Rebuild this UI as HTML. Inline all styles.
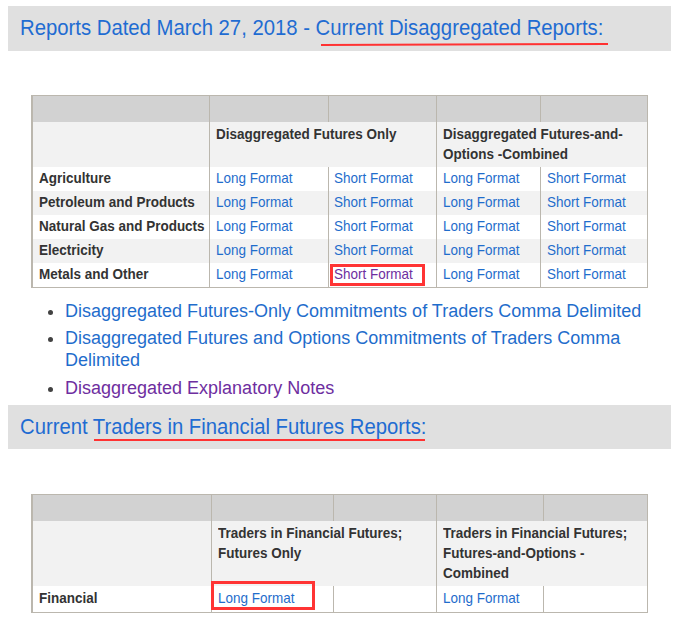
<!DOCTYPE html>
<html><head><meta charset="utf-8">
<style>
html,body{margin:0;padding:0;background:#fff;width:697px;height:620px;overflow:hidden;position:relative;}
body{font-family:"Liberation Sans",sans-serif;}
.a{position:absolute;white-space:nowrap;}
.hbox{position:absolute;left:8px;width:663px;background:#e0e0e0;}
.htxt{position:absolute;left:19.6px;font-size:21.4px;color:#1f6cd2;line-height:24px;transform:scaleX(0.949);transform-origin:0 0;}
.bg{position:absolute;}
.vl{position:absolute;width:1px;background:#bbb7ae;}
.hl{position:absolute;height:1px;background:#bbb7ae;}
.t{position:absolute;white-space:nowrap;font-size:14.5px;line-height:20px;transform:scaleX(0.93);transform-origin:0 0;}
.b{font-weight:bold;color:#333;}
.l{color:#1f6dcc;}
.v,.li.v{color:#6e2ea0;}
.li{position:absolute;left:65px;font-size:18px;line-height:22px;color:#1f6dcc;white-space:nowrap;}
.dot{position:absolute;left:48px;width:5px;height:5px;border-radius:50%;background:#424242;}
.red{position:absolute;background:#ff3232;}
.rbox{position:absolute;border:3px solid #ff3434;box-sizing:border-box;}
</style></head><body>

<!-- Heading 1 -->
<div class="hbox" style="top:6px;height:45px;"></div>
<div class="htxt a" style="top:16px;">Reports Dated March 27, 2018 - Current Disaggregated Reports:</div>
<svg style="position:absolute;left:0;top:0;" width="697" height="60"><line x1="321" y1="45" x2="608" y2="44" stroke="#ff3232" stroke-width="2"/></svg>

<!-- Table 1 -->
<div class="bg" style="left:31px;top:95px;width:617px;height:27px;background:#d2d2d2;"></div>
<div class="bg" style="left:31px;top:122px;width:617px;height:45px;background:#f2f2f2;"></div>
<div class="bg" style="left:31px;top:191px;width:617px;height:24px;background:#f2f2f2;"></div>
<div class="bg" style="left:31px;top:239px;width:617px;height:24px;background:#f2f2f2;"></div>
<div class="hl" style="left:31px;top:95px;width:617px;"></div>
<div class="hl" style="left:31px;top:287px;width:617px;"></div>
<div class="vl" style="left:31px;top:95px;height:193px;width:2px;"></div>
<div class="vl" style="left:647px;top:95px;height:193px;"></div>
<div class="vl" style="left:209px;top:95px;height:193px;"></div>
<div class="vl" style="left:436px;top:95px;height:193px;"></div>
<div class="vl" style="left:328px;top:95px;height:27px;"></div>
<div class="vl" style="left:540px;top:95px;height:27px;"></div>
<div class="vl" style="left:328px;top:167px;height:121px;"></div>
<div class="vl" style="left:540px;top:167px;height:121px;"></div>

<div class="t b" style="left:216px;top:124px;">Disaggregated Futures Only</div>
<div class="t b" style="left:443px;top:124px;">Disaggregated Futures-and-<br>Options -Combined</div>

<div class="t b" style="left:39px;top:168px;">Agriculture</div>
<div class="t l" style="left:216px;top:168px;">Long Format</div>
<div class="t l" style="left:334px;top:168px;">Short Format</div>
<div class="t l" style="left:443px;top:168px;">Long Format</div>
<div class="t l" style="left:547px;top:168px;">Short Format</div>
<div class="t b" style="left:39px;top:192px;">Petroleum and Products</div>
<div class="t l" style="left:216px;top:192px;">Long Format</div>
<div class="t l" style="left:334px;top:192px;">Short Format</div>
<div class="t l" style="left:443px;top:192px;">Long Format</div>
<div class="t l" style="left:547px;top:192px;">Short Format</div>
<div class="t b" style="left:39px;top:216px;">Natural Gas and Products</div>
<div class="t l" style="left:216px;top:216px;">Long Format</div>
<div class="t l" style="left:334px;top:216px;">Short Format</div>
<div class="t l" style="left:443px;top:216px;">Long Format</div>
<div class="t l" style="left:547px;top:216px;">Short Format</div>
<div class="t b" style="left:39px;top:240px;">Electricity</div>
<div class="t l" style="left:216px;top:240px;">Long Format</div>
<div class="t l" style="left:334px;top:240px;">Short Format</div>
<div class="t l" style="left:443px;top:240px;">Long Format</div>
<div class="t l" style="left:547px;top:240px;">Short Format</div>
<div class="t b" style="left:39px;top:264px;">Metals and Other</div>
<div class="t l" style="left:216px;top:264px;">Long Format</div>
<div class="t v" style="left:334px;top:264px;">Short Format</div>
<div class="t l" style="left:443px;top:264px;">Long Format</div>
<div class="t l" style="left:547px;top:264px;">Short Format</div>

<div class="rbox" style="left:330px;top:264px;width:95px;height:22px;"></div>


<!-- List -->
<div class="dot" style="top:310px;"></div>
<div class="li" style="top:300px;">Disaggregated Futures-Only Commitments of Traders Comma Delimited</div>
<div class="dot" style="top:337px;"></div>
<div class="li" style="top:327px;">Disaggregated Futures and Options Commitments of Traders Comma<br>Delimited</div>
<div class="dot" style="top:387px;"></div>
<div class="li v" style="top:377px;">Disaggregated Explanatory Notes</div>

<!-- Heading 2 -->
<div class="hbox" style="top:405px;height:44px;"></div>
<div class="htxt a" style="top:415px;transform:scaleX(0.947);">Current Traders in Financial Futures Reports:</div>
<div class="red" style="left:94px;top:439px;width:331px;height:2px;"></div>

<!-- Table 2 -->
<div class="bg" style="left:31px;top:494px;width:617px;height:27px;background:#d2d2d2;"></div>
<div class="bg" style="left:31px;top:521px;width:617px;height:65px;background:#f2f2f2;"></div>
<div class="hl" style="left:31px;top:494px;width:617px;"></div>
<div class="hl" style="left:31px;top:612px;width:617px;"></div>
<div class="vl" style="left:31px;top:494px;height:119px;width:2px;"></div>
<div class="vl" style="left:647px;top:494px;height:119px;"></div>
<div class="vl" style="left:211px;top:494px;height:119px;"></div>
<div class="vl" style="left:436px;top:494px;height:119px;"></div>
<div class="vl" style="left:333px;top:494px;height:27px;"></div>
<div class="vl" style="left:543px;top:494px;height:27px;"></div>
<div class="vl" style="left:333px;top:586px;height:27px;"></div>
<div class="vl" style="left:543px;top:586px;height:27px;"></div>

<div class="t b" style="left:218px;top:523px;">Traders in Financial Futures;<br>Futures Only</div>
<div class="t b" style="left:443px;top:523px;">Traders in Financial Futures;<br>Futures-and-Options -<br>Combined</div>
<div class="t b" style="left:39px;top:588px;">Financial</div>
<div class="t l" style="left:218px;top:588px;">Long Format</div>
<div class="t l" style="left:443px;top:588px;">Long Format</div>

<div class="rbox" style="left:211px;top:581px;width:104px;height:29px;"></div>

</body></html>
